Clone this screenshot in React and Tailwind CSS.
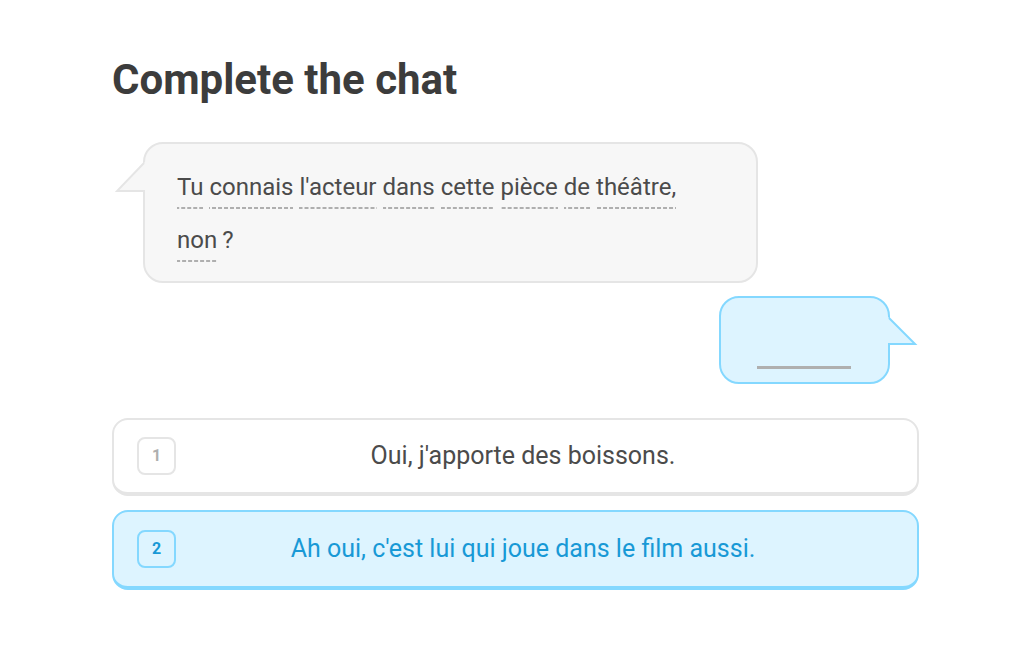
import { useState } from "react";

const words1 = ["Tu", "connais", "l'acteur", "dans", "cette", "pièce", "de", "théâtre,"];
const words2 = ["non", "?"];

const options = [
  { n: 1, text: "Oui, j'apporte des boissons." },
  { n: 2, text: "Ah oui, c'est lui qui joue dans le film aussi." },
];

function Word({ w, dashed = true }) {
  return (
    <span
      className={
        dashed && w !== "?"
          ? "inline-block bg-[linear-gradient(to_right,#afafaf_4px,transparent_4px)] bg-[length:6px_2px] bg-repeat-x bg-bottom leading-[24px] pb-[10px]"
          : "inline-block leading-[24px] pb-[10px]"
      }
    >
      {w}
    </span>
  );
}

export default function App() {
  const [selected, setSelected] = useState(2);

  return (
    <div className="w-[1024px] h-[655px] bg-white font-['Roboto',sans-serif] overflow-hidden">
      <div className="ml-[112px] w-[807px] pt-[56px]">
        {/* Title */}
        <h1 className="text-[42px] font-bold leading-[48px] text-[#3c3c3c]">
          Complete the chat
        </h1>

        {/* Prompt bubble */}
        <div className="mt-[38px] ml-[31px] relative w-[615px] h-[141px] rounded-[20px] border-2 border-[#e5e5e5] bg-[#f7f7f7] pl-[32px] pt-[31px]">
          <svg className="absolute left-[-30px] top-[18px]" width="34" height="32" viewBox="0 0 34 32">
            <polygon points="30,0 1,30 34,30 34,0" fill="#f7f7f7" />
            <polyline points="29,1 2,29 30,29" fill="none" stroke="#e5e5e5" strokeWidth="2" strokeLinejoin="miter" />
          </svg>
          <div className="text-[24px] text-[#4b4b4b]">
            <div className="flex gap-[6px]">
              {words1.map((w, i) => (
                <Word key={i} w={w} />
              ))}
            </div>
            <div className="flex gap-[5px] mt-[19px]">
              {words2.map((w, i) => (
                <Word key={i} w={w} />
              ))}
            </div>
          </div>
        </div>

        {/* Answer bubble */}
        <div className="mt-[13px] ml-[607px] relative w-[171px] h-[88px] rounded-[20px] border-2 border-[#84d8ff] bg-[#ddf4ff]">
          <svg className="absolute right-[-30px] top-[19px]" width="34" height="32" viewBox="0 0 34 32">
            <polygon points="4,0 33,28 0,28 0,0" fill="#ddf4ff" />
            <polyline points="5,1 31,27 4,27" fill="none" stroke="#84d8ff" strokeWidth="2" />
          </svg>
          <div className="absolute left-[36px] top-[68px] w-[94px] h-[3px] bg-[#afafaf]" />
        </div>

        {/* Options */}
        <div className="mt-[34px] flex flex-col gap-[14px]">
          {options.map((o) => {
            const active = selected === o.n;
            return (
              <button
                key={o.n}
                onClick={() => setSelected(o.n)}
                className={
                  active
                    ? "flex items-center h-[80px] pl-[23px] pr-[47px] rounded-[16px] border-2 border-b-4 border-[#84d8ff] bg-[#ddf4ff] text-[#1899d6]"
                    : "flex items-center h-[78px] pl-[23px] pr-[47px] rounded-[16px] border-2 border-b-4 border-[#e5e5e5] bg-white text-[#4b4b4b]"
                }
              >
                <span
                  className={
                    active
                      ? "w-[39px] h-[38px] flex items-center justify-center rounded-[8px] border-2 border-[#84d8ff] text-[16px] font-bold text-[#1899d6]"
                      : "w-[39px] h-[38px] flex items-center justify-center rounded-[8px] border-2 border-[#e5e5e5] text-[16px] font-bold text-[#afafaf]"
                  }
                >
                  {o.n}
                </span>
                <span className="flex-1 text-center text-[25px]">{o.text}</span>
              </button>
            );
          })}
        </div>
      </div>
    </div>
  );
}
